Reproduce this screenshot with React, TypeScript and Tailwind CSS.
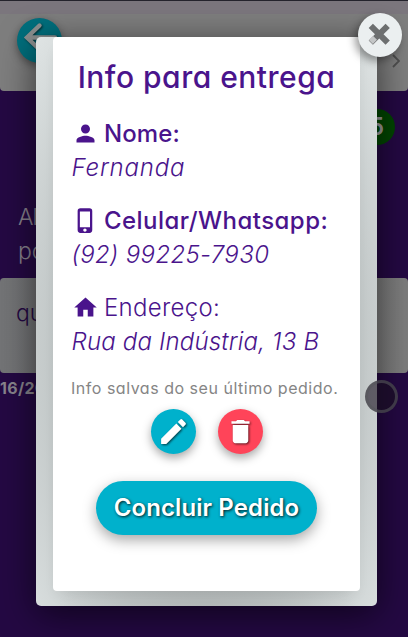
import type { ReactNode } from "react";
import { MdDelete, MdEdit, MdHome, MdPerson, MdPhoneIphone } from "react-icons/md";

function Field({
  icon,
  label,
  labelClass,
  value,
  valueClass,
}: {
  icon: ReactNode;
  label: string;
  labelClass: string;
  value: string;
  valueClass: string;
}) {
  return (
    <div className="h-[87px] pl-[18.5px] whitespace-nowrap text-[#4a148c] text-[24px]">
      <div className="flex h-[34px] items-center">
        <span className="mr-[5.5px] text-[27px]">{icon}</span>
        <span className={`pt-[2px] ${labelClass}`}>{label}</span>
      </div>
      <div className={`h-[34px] leading-[36px] italic font-light ${valueClass}`}>{value}</div>
    </div>
  );
}

function Backdrop() {
  return (
    <div className="flex h-[637px] flex-col bg-[#240943]">
      <div className="h-px bg-[#24232c]" />
      <div className="h-[13px] bg-[#7b767d]" />
      <header className="flex h-[77px] items-start justify-between rounded-b-[4px] bg-[#7e7e7e] pl-[17px] pr-[8px]">
        <div className="mt-[4px] flex size-[45px] items-center justify-center rounded-full bg-[#006f7d] shadow-[0_3px_8px_rgba(0,0,0,0.4)]">
          <svg viewBox="0 0 45 45" className="size-[45px] drop-shadow-[1px_1px_1px_rgba(0,0,0,0.6)]" fill="none" stroke="#8d9090" strokeWidth="4.4" strokeLinecap="round">
            <path d="M22.5 7.5 10 19.5l12.5 12M11 19.5h27" />
          </svg>
        </div>
        <svg viewBox="0 0 8 14" className="mt-[40px] h-[14px] w-[8px]" fill="none" stroke="#4f4f4f" strokeWidth="1.8">
          <path d="m1 1 6 6-6 6" />
        </svg>
      </header>
      <div className="flex h-[187px] flex-col pt-[18px]">
        <div className="mr-[13px] flex size-[36px] items-center justify-end self-end rounded-full bg-[#004500] pr-[11px] text-[24px] font-semibold text-[#9a9a9a]">
          5
        </div>
        <div className="mt-[55px] pl-[18px] text-[23px] font-light leading-[34px] text-[#87818c]">
          <div className="tracking-[-1px]">Al</div>
          <div>po</div>
        </div>
      </div>
      <div className="h-[95px] rounded-[4px] bg-linear-to-r from-[#737476] to-[#7d7d7d] pl-[16px] pt-[18px] text-[23px] font-light leading-[34px] text-[#240943]">
        qu
      </div>
      <div className="h-[32px] text-[16px] font-bold leading-[30px] tracking-[0.3px] text-[#88848c]">16/20</div>
    </div>
  );
}

export default function App() {
  return (
    <div className="relative h-[637px] w-[408px] overflow-hidden font-['Inter','Open_Sans',sans-serif] [font-feature-settings:'cv11']">
      <Backdrop />

      <div className="absolute left-[36px] top-[37px] h-[569px] w-[341px] rounded-[5px] bg-[radial-gradient(ellipse_150px_40px_at_50%_100%,#b3b8b8,transparent),radial-gradient(ellipse_farthest-corner_at_50%_55%,#8f9696,#dfe4e4)] px-[17px] shadow-[0_8px_36px_rgba(0,0,0,0.6)]">
        <section className="flex h-[554px] w-[307px] flex-col rounded-[4px] bg-white shadow-[0_8px_14px_-6px_rgba(0,0,0,0.12)]">
          <h1 className="mt-[18px] h-[44px] whitespace-nowrap text-center text-[30px] font-medium leading-[44px] tracking-[0.5px] text-[#4a148c]">
            Info para entrega
          </h1>
          <div className="mt-[17px]">
            <Field icon={<MdPerson />} label="Nome:" labelClass="font-medium tracking-[0.1px]" value="Fernanda" valueClass="tracking-[0.8px]" />
            <Field
              icon={<MdPhoneIphone />}
              label="Celular/Whatsapp:"
              labelClass="font-medium tracking-[0.45px]"
              value="(92) 99225-7930"
              valueClass="tracking-[0.35px]"
            />
            <Field
              icon={<MdHome />}
              label="Endereço:"
              labelClass="[font-weight:350] tracking-[0.3px]"
              value="Rua da Indústria, 13 B"
              valueClass="tracking-[0.18px]"
            />
          </div>
          <p className="h-[24px] whitespace-nowrap pl-[18px] text-[16px] leading-[23px] tracking-[0.52px] text-[#858585]">
            Info salvas do seu último pedido.
          </p>
          <div className="mt-[8px] flex justify-center gap-[22px]">
            <button className="flex size-[45px] items-center justify-center rounded-full bg-[#00b1cc] text-white shadow-[0_4px_10px_rgba(0,0,0,0.35)]">
              <MdEdit className="size-[33px] drop-shadow-[1px_1px_1px_rgba(0,0,0,0.65)]" />
            </button>
            <button className="flex size-[45px] items-center justify-center rounded-full bg-[#ff4459] text-white shadow-[0_4px_10px_rgba(0,0,0,0.35)]">
              <MdDelete className="size-[31px] drop-shadow-[1px_1px_1px_rgba(0,0,0,0.65)]" />
            </button>
          </div>
          <button className="mt-[27px] h-[54px] w-[221px] self-center whitespace-nowrap rounded-full bg-[#00b1cc] text-[24px] font-semibold leading-[54px] tracking-[0.1px] text-white shadow-[0_5px_14px_rgba(0,0,0,0.35)] [text-shadow:1px_1px_3px_rgba(0,0,0,0.85)]">
            Concluir Pedido
          </button>
        </section>
      </div>

      <div className="absolute left-[365px] top-[380px] size-[33px] rounded-full border-3 border-[#55565c]/60 bg-[#191120]/60" />

      <button className="absolute left-[357.5px] top-[12.5px] flex size-[44px] items-center justify-center rounded-full bg-[#ebeff0] shadow-[-3px_4px_9px_rgba(0,0,0,0.4)]">
        <svg viewBox="0 0 24 24" className="size-[22.5px]">
          <path d="m3 3 18 18M21 3 3 21" stroke="#6d6f70" strokeWidth="6.4" />
          <path d="m.9 18.2 4.6-4.4 4.1 4.1-4.4 4.4z" fill="#c4c6c7" />
        </svg>
      </button>
    </div>
  );
}
